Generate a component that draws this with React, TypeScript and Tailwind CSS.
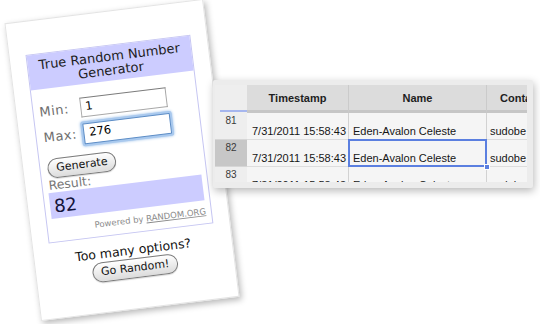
import React from "react";

function Card() {
  return (
    <div
      className="absolute left-[22px] top-[10px] w-[200px] h-[300px] rotate-[-7deg] bg-white border border-[#e4e4e4] shadow-[2px_3px_6px_rgba(0,0,0,0.28)] flex flex-col items-center pt-[33px]"
      style={{ fontFamily: '"DejaVu Sans", Verdana, sans-serif' }}
    >
      <div className="w-[166px] border border-[#c6c6f2] flex flex-col">
        <div className="bg-[#ccccff] text-[13px] leading-[14px] text-[#1c1c1c] text-center pt-[4px] pb-[3px] whitespace-nowrap">
          <div>True Random Number</div>
          <div>Generator</div>
        </div>
        <div className="flex flex-col px-[5px] pb-[7px]">
          <div className="flex items-center h-[20px] mt-[13px]">
            <span className="w-[42px] pl-[1px] text-[13px] text-[#6e6e6e] tracking-[0.5px]">Min:</span>
            <div className="w-[87px] h-[20px] bg-white border border-[#a8a8a8] border-t-[#7c7c7c] flex items-center pl-[4px] text-[11.5px] text-black">
              1
            </div>
          </div>
          <div className="flex items-center h-[20px] mt-[6px]">
            <span className="w-[42px] pl-[2px] text-[13px] text-[#6e6e6e] tracking-[0.5px]">Max:</span>
            <div className="w-[88px] h-[21px] bg-white border border-[#5d8dc6] shadow-[0_0_0_2px_#a9c9ee,0_0_3px_2px_#8fb8e6] rounded-[1px] flex items-center pl-[5px] text-[11.5px] text-black">
              276
            </div>
          </div>
          <div className="flex mt-[11px] ml-[2px]">
            <div className="h-[20px] px-[8px] rounded-full border border-[#7a7a7a] bg-gradient-to-b from-white to-[#dcdcdc] flex items-center text-[11px] text-[#111] shadow-[0_1px_1px_rgba(0,0,0,0.15)]">
              Generate
            </div>
          </div>
          <div className="text-[12.5px] leading-[14px] text-[#777] pl-[1px]">Result:</div>
          <div className="h-[26px] bg-[#ccccff] flex items-end pl-[4px] pb-[1px] text-[18px] leading-[22px] text-[#14143a]">
            82
          </div>
          <div className="text-right text-[8.5px] leading-[10px] text-[#8a8a8a] mt-[6px] whitespace-nowrap">
            Powered by <span className="underline">RANDOM.ORG</span>
          </div>
        </div>
      </div>
      <div className="mt-[10px] text-[12.5px] leading-[14px] text-[#111] whitespace-nowrap">Too many options?</div>
      <div className="mt-[1px] h-[20px] px-[8px] rounded-full border border-[#7a7a7a] bg-gradient-to-b from-white to-[#dcdcdc] flex items-center text-[11px] text-[#111] shadow-[0_1px_1px_rgba(0,0,0,0.15)]">
        Go Random!
      </div>
    </div>
  );
}

function RowNum({ n, active }: { n: string; active?: boolean }) {
  return (
    <div
      className={
        "h-[27px] border-b border-[#d6d6d6] flex justify-center pt-[2px] text-[10px] leading-[12px] text-[#3a3a3a] " +
        (active ? "bg-[#c7c7c7]" : "bg-[#eeeeee]")
      }
    >
      {n}
    </div>
  );
}

function Cell({
  children,
  align = "left",
  selected,
  last,
}: {
  children: React.ReactNode;
  align?: "left" | "right";
  selected?: boolean;
  last?: boolean;
}) {
  return (
    <div
      className={
        "relative h-[27px] border-b border-[#dddddd] flex items-end pb-[1px] text-[11px] leading-[13px] text-[#161616] whitespace-nowrap " +
        (selected ? "z-10 " : "") +
        (last ? "" : "border-r border-r-[#d2d2d2] ") +
        (align === "right" ? "justify-end pr-[2px]" : "justify-start pl-[4px]")
      }
    >
      {children}
      {selected && (
        <>
          <div className="absolute left-[-1px] top-[-1px] right-[-1px] bottom-[-1px] border-2 border-[#5b7fe0]" />
          <div className="absolute right-[-4px] bottom-[-4px] w-[6px] h-[6px] bg-[#5b7fe0] border border-white" />
        </>
      )}
    </div>
  );
}

function Sheet() {
  return (
    <div
      className="absolute left-[213px] top-[80px] w-[320px] h-[108px] bg-[#ececec] shadow-[1px_3px_8px_rgba(0,0,0,0.28)] rounded-[2px] pt-[5px] pl-[2px]"
      style={{ fontFamily: '"Liberation Sans", Arial, sans-serif' }}
    >
      <div className="w-[312px] h-[97px] overflow-hidden bg-[#f5f5f5] grid grid-cols-[32px_102px_138px_40px] content-start">
        <div className="h-[28px] bg-[#eeeeee] flex items-end pl-[5px]">
          <div className="w-full h-[2px] mb-[1px] bg-[#a6b6ee]" />
        </div>
        <div className="h-[28px] bg-[#dcdcdc] border-r border-[#cbcbcb] border-b-[3px] border-b-[#c6c6c6] flex items-end justify-center pb-[4px] text-[11px] font-bold text-[#1e1e1e]">
          Timestamp
        </div>
        <div className="h-[28px] bg-[#dcdcdc] border-r border-[#cbcbcb] border-b-[3px] border-b-[#c6c6c6] flex items-end justify-center pb-[4px] text-[11px] font-bold text-[#1e1e1e]">
          Name
        </div>
        <div className="h-[28px] bg-[#dcdcdc] border-b-[3px] border-b-[#c6c6c6] flex items-end pl-[13px] pb-[4px] text-[11px] font-bold text-[#1e1e1e] whitespace-nowrap overflow-hidden">
          Contact
        </div>

        <RowNum n="81" />
        <Cell align="right">7/31/2011 15:58:43</Cell>
        <Cell>Eden-Avalon Celeste</Cell>
        <Cell last>
          <span className="ml-[-1px]">sudobe</span>
        </Cell>

        <RowNum n="82" active />
        <Cell align="right">7/31/2011 15:58:43</Cell>
        <Cell selected>Eden-Avalon Celeste</Cell>
        <Cell last>
          <span className="ml-[-1px]">sudobe</span>
        </Cell>

        <RowNum n="83" />
        <Cell align="right">7/31/2011 15:58:43</Cell>
        <Cell>Eden-Avalon Celeste</Cell>
        <Cell last>
          <span className="ml-[-1px]">sudobe</span>
        </Cell>
      </div>
    </div>
  );
}

export default function App() {
  return (
    <div className="relative w-[540px] h-[324px] overflow-hidden bg-white">
      <Card />
      <Sheet />
    </div>
  );
}
